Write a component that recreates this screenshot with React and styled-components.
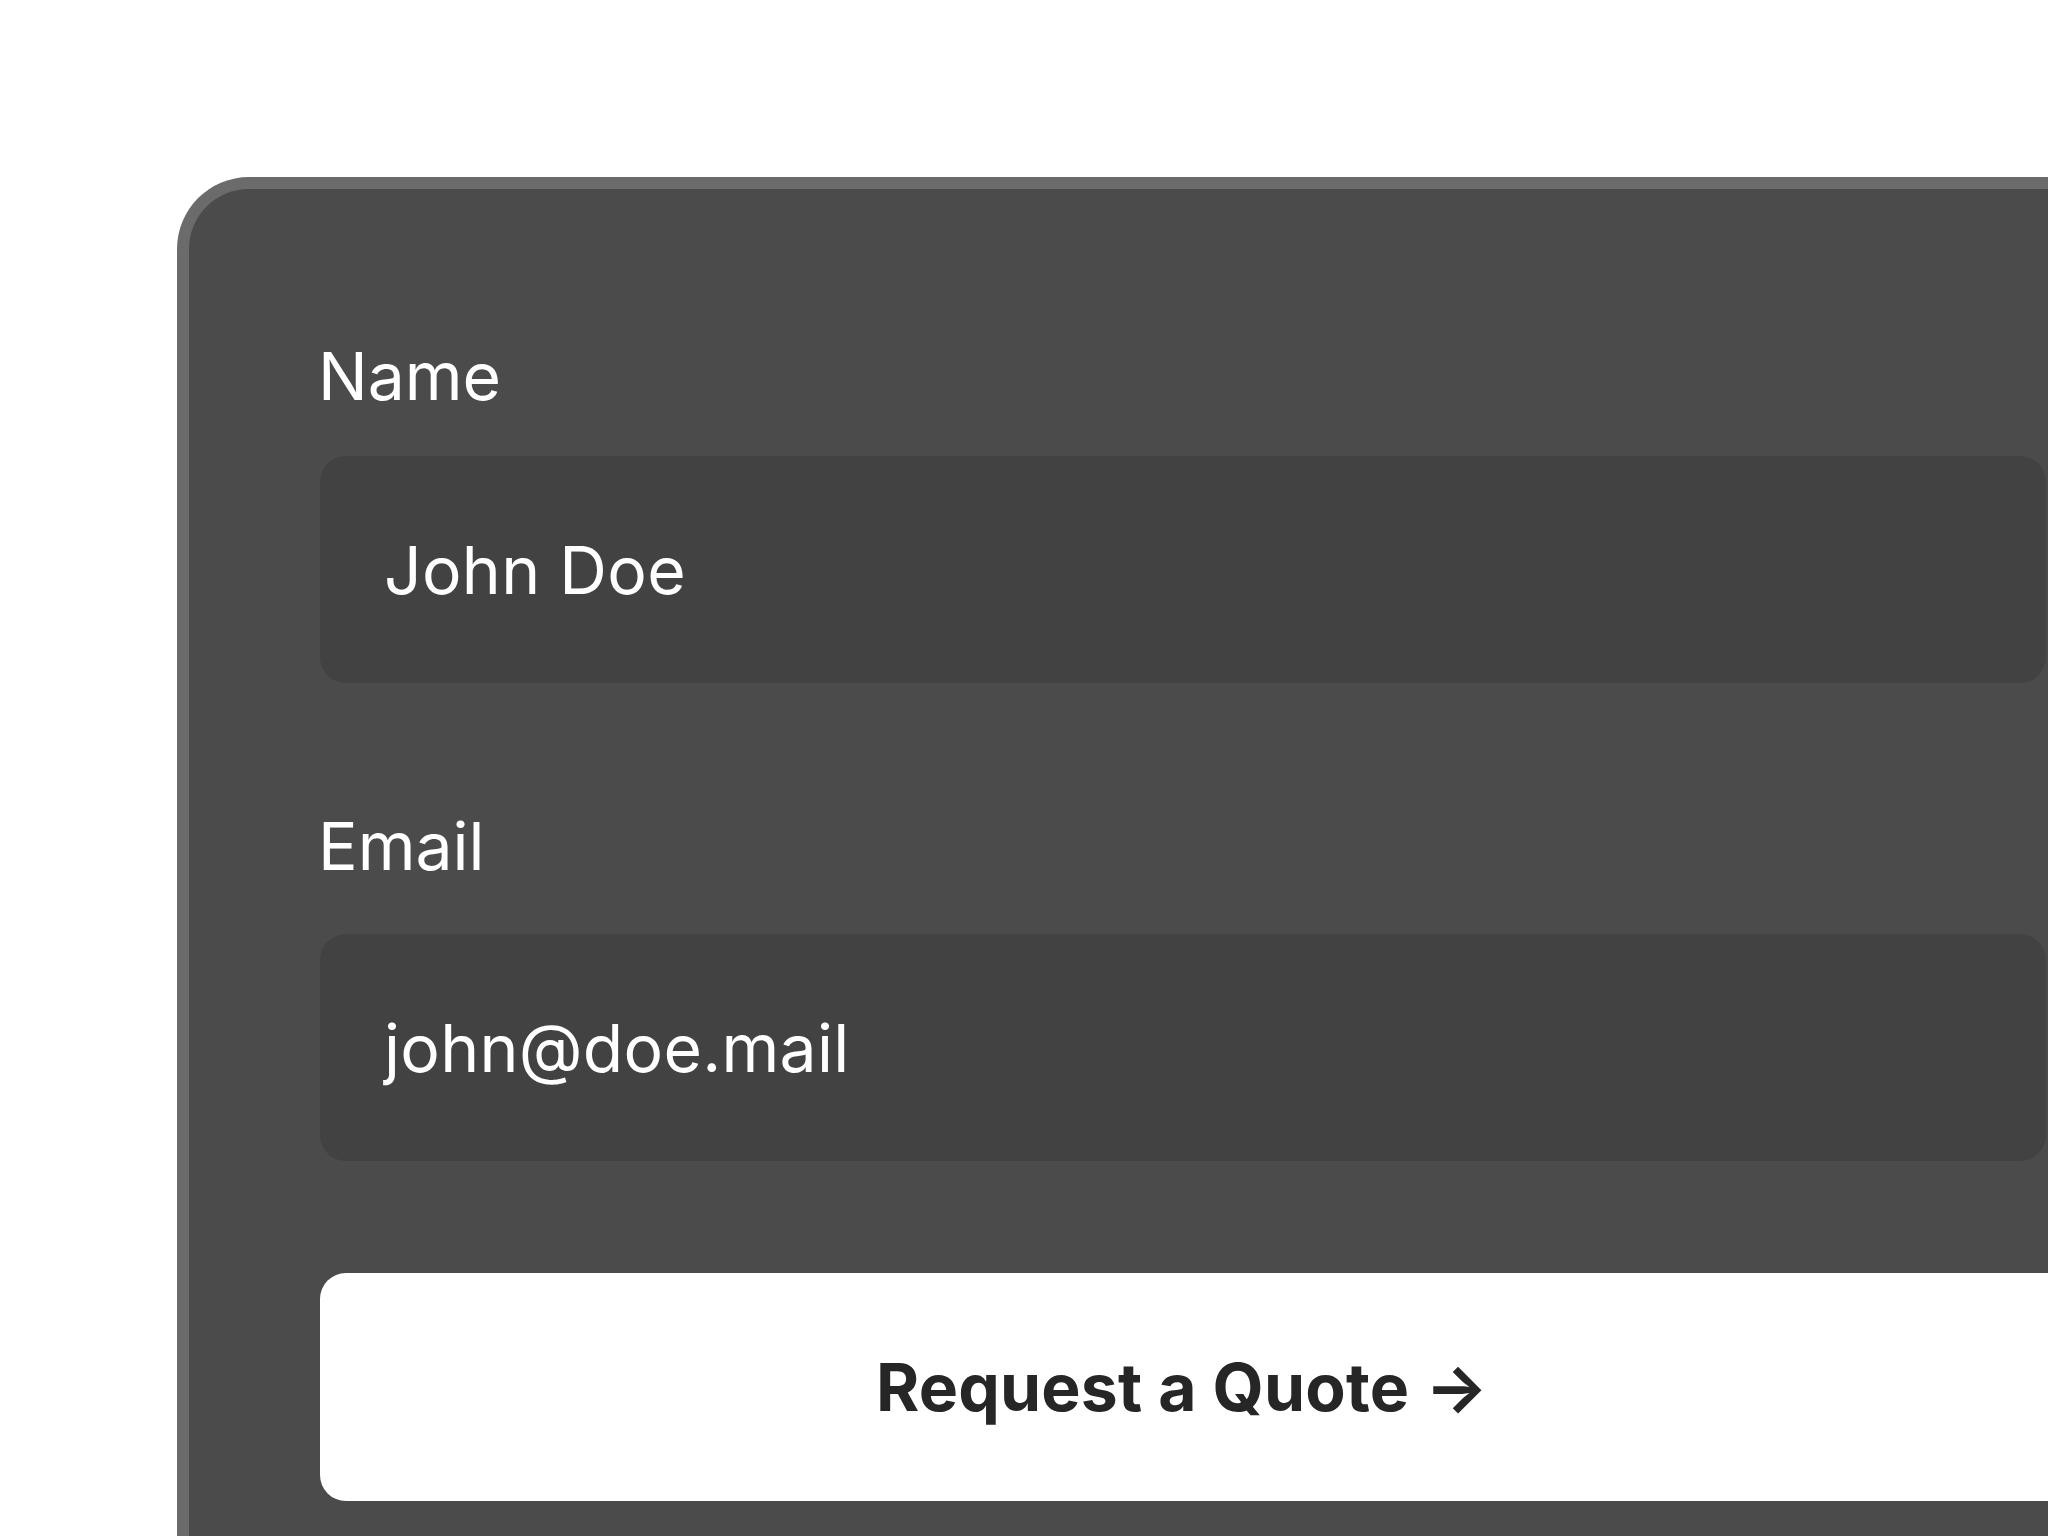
import React from "react";
import styled, { createGlobalStyle } from "styled-components";

const GlobalStyle = createGlobalStyle`
  html, body {
    margin: 0;
    padding: 0;
    background: #ffffff;
    overflow: hidden;
  }
  body {
    width: 2048px;
    height: 1536px;
    font-family: Inter, "Liberation Sans", sans-serif;
  }
`;

const Page = styled.div`
  padding: 177px 0 0 177px;
  height: 1536px;
  box-sizing: border-box;
  overflow: hidden;
`;

const Card = styled.div`
  width: 2200px;
  height: 1600px;
  box-sizing: border-box;
  background: #4b4b4b;
  border-top: 12px solid #6b6b6b;
  border-left: 12px solid #6b6b6b;
  border-radius: 72px 0 0 0;
  padding: 147px 0 0 131px;
  display: flex;
  flex-direction: column;
`;

const Field = styled.div`
  display: flex;
  flex-direction: column;
  width: 1726px;
  margin-bottom: ${(p) => p.$after}px;
`;

const Label = styled.label`
  font-size: 66px;
  line-height: 80px;
  color: #ffffff;
  font-weight: 400;
  margin-left: -2px;
  margin-bottom: ${(p) => p.$gap}px;
`;

const Input = styled.div`
  height: 227px;
  box-sizing: border-box;
  background: #424242;
  border-radius: 26px;
  padding-left: 64px;
  display: flex;
  align-items: center;
  font-size: 66px;
  line-height: 80px;
  letter-spacing: 0.3px;
  color: #ffffff;
`;

const Button = styled.button`
  width: 1900px;
  height: 228px;
  border: none;
  border-radius: 26px 0 0 26px;
  background: #ffffff;
  color: #262626;
  font-family: Inter, "Liberation Sans", sans-serif;
  font-size: 66px;
  line-height: 80px;
  font-weight: 700;
  letter-spacing: 0.2px;
  text-align: left;
  padding: 0 0 0 556px;
  cursor: pointer;
`;

export default function App() {
  return (
    <>
      <GlobalStyle />
      <Page>
        <Card>
          <Field $after={123}>
            <Label $gap={40}>Name</Label>
            <Input>John Doe</Input>
          </Field>
          <Field $after={112}>
            <Label $gap={48}>Email</Label>
            <Input>john@doe.mail</Input>
          </Field>
          <Button>Request a Quote →</Button>
        </Card>
      </Page>
    </>
  );
}
